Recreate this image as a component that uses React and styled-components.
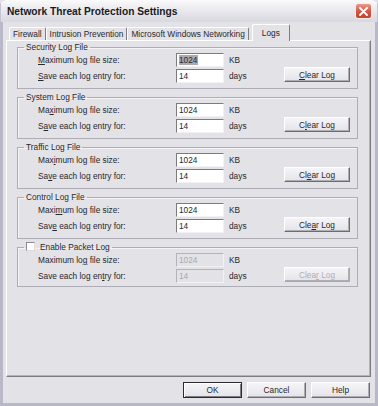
import React from "react";
import styled, { createGlobalStyle } from "styled-components";

const GlobalStyle = createGlobalStyle`
  html, body {
    margin: 0;
    padding: 0;
    background: #e3e2e7;
  }
`;

const Window = styled.div`
  width: 378px;
  height: 406px;
  display: flex;
  flex-direction: column;
  font-family: "Liberation Sans", Arial, sans-serif;
  font-size: 8.3px;
  color: #28282c;
  background: #b9b8c8;
  border-radius: 6px 6px 0 0;
  overflow: hidden;
`;

const TitleBar = styled.div`
  height: 22px;
  box-sizing: border-box;
  display: flex;
  align-items: flex-start;
  justify-content: space-between;
  padding: 3px 5px 0 6px;
  background: linear-gradient(#fbfbfc 0%, #e9e9ee 45%, #d8d8df 100%);
  border-left: 1px solid #c4c3d2;
  border-right: 1px solid #c4c3d2;
`;

const Title = styled.span`
  font-weight: bold;
  font-size: 10.2px;
  line-height: 18px;
  color: #1a1a22;
`;

const CloseButton = styled.div`
  width: 17px;
  height: 16px;
  box-sizing: border-box;
  border: 1px solid #f4eeee;
  border-radius: 3px;
  background: linear-gradient(#ec9a8c, #d2553f 55%, #c2432f);
  display: flex;
  align-items: center;
  justify-content: center;
`;

const Body = styled.div`
  flex: 1;
  display: flex;
  flex-direction: column;
  background: #e3e2e7;
  border: 3px solid #b9b8c8;
  border-top: 0;
  padding: 2px 4px 0 3px;
`;

const TabStrip = styled.div`
  height: 16px;
  display: flex;
  align-items: flex-end;
  padding-left: 3px;
`;

const Tab = styled.div`
  position: relative;
  height: ${(p) => (p.active ? "17px" : "13px")};
  box-sizing: border-box;
  padding: ${(p) => (p.active ? "2px 9px 0" : "0 3px")};
  margin: ${(p) => (p.active ? "0 0 -1px 3px" : "0")};
  line-height: 12px;
  background: #e3e2e7;
  border-top: 1px solid #ffffff;
  border-left: 1px solid #ffffff;
  border-right: 1px solid #7c7c82;
  border-radius: 2px 2px 0 0;
  z-index: ${(p) => (p.active ? 1 : 0)};
  white-space: nowrap;
`;

const Panel = styled.div`
  height: 337px;
  box-sizing: border-box;
  display: flex;
  flex-direction: column;
  gap: 3px;
  padding: 1px 12px 0 10px;
  border-top: 1px solid #ffffff;
  border-left: 1px solid #ffffff;
  border-right: 1px solid #7c7c82;
  border-bottom: 1px solid #7c7c82;
  box-shadow: inset -1px -1px 0 #b4b3ba;
`;

const Group = styled.fieldset`
  margin: 0;
  padding: 0 0 ${(p) => (p.short ? "2px" : "4px")} 0;
  min-width: 0;
  border: 1px solid #aeadb5;
  box-shadow: inset 1px 1px 0 #f4f4f6;
`;

const Legend = styled.legend`
  margin-left: 6px;
  padding: 0 2px;
  line-height: 10px;
  white-space: nowrap;
`;

const CheckBox = styled.span`
  display: inline-block;
  width: 9px;
  height: 9px;
  box-sizing: border-box;
  margin-right: 5px;
  vertical-align: -1px;
  background: #ffffff;
  border: 1px solid;
  border-color: #8a8a90 #dcdce0 #dcdce0 #8a8a90;
`;

const Row = styled.div`
  height: 16px;
  display: flex;
  align-items: center;
  padding-left: 20px;
`;

const Label = styled.span`
  width: 138px;
  white-space: nowrap;
`;

const TextBox = styled.div`
  width: 48px;
  height: 14px;
  box-sizing: border-box;
  padding-left: 2px;
  line-height: 12px;
  background: ${(p) => (p.disabled ? "#e3e2e7" : "#ffffff")};
  color: ${(p) => (p.disabled ? "#a9a8b0" : "#28282c")};
  border: 1px solid;
  border-color: ${(p) =>
    p.disabled ? "#b3b2b9 #f2f2f4 #f2f2f4 #b3b2b9" : "#7a7a80 #f2f2f4 #f2f2f4 #7a7a80"};
`;

const Selected = styled.span`
  background: #aaa9b0;
  padding-right: 1px;
`;

const Unit = styled.span`
  width: 60px;
  box-sizing: border-box;
  padding-left: 5px;
`;

const Button = styled.div`
  width: ${(p) => p.w || 59}px;
  height: ${(p) => p.h || 16}px;
  box-sizing: border-box;
  display: flex;
  align-items: center;
  justify-content: center;
  color: ${(p) => (p.disabled ? "#b0afb6" : "#28282c")};
  background: linear-gradient(#f5f5f7, #e4e3e8);
  border: 1px solid;
  border-color: ${(p) =>
    p.primary
      ? "#2c2c30"
      : p.disabled
      ? "#ffffff #a9a8af #a9a8af #ffffff"
      : "#ffffff #6c6c72 #6c6c72 #ffffff"};
  box-shadow: ${(p) =>
    p.primary
      ? "inset 1px 1px 0 #ffffff, inset -1px -1px 0 #7c7c82"
      : "inset -1px -1px 0 #aeadb4"};
`;

const ClearButton = styled(Button)`
  align-self: flex-start;
  margin-top: -1px;
`;

const Footer = styled.div`
  display: flex;
  justify-content: flex-end;
  gap: 5px;
  padding: 5px 1px 0 0;
`;

const groups = [
  {
    title: "Security Log File",
    size: ["", "M", "aximum log file size:"],
    days: ["", "S", "ave each log entry for:"],
    clear: ["", "C", "lear Log"],
    selected: true,
  },
  {
    title: "System Log File",
    size: ["Ma", "x", "imum log file size:"],
    days: ["S", "a", "ve each log entry for:"],
    clear: ["C", "l", "ear Log"],
  },
  {
    title: "Traffic Log File",
    size: ["Max", "i", "mum log file size:"],
    days: ["Sa", "v", "e each log entry for:"],
    clear: ["Cl", "e", "ar Log"],
  },
  {
    title: "Control Log File",
    size: ["Maxi", "m", "um log file size:"],
    days: ["Sav", "e", " each log entry for:"],
    clear: ["Cle", "a", "r Log"],
  },
];

const Key = ({ parts }) => (
  <>
    {parts[0]}
    <u>{parts[1]}</u>
    {parts[2]}
  </>
);

const CloseIcon = () => (
  <svg width="9" height="9" viewBox="0 0 9 9">
    <path d="M1 1 L8 8 M8 1 L1 8" stroke="#ffffff" strokeWidth="1.8" strokeLinecap="round" />
  </svg>
);

export default function App() {
  return (
    <>
      <GlobalStyle />
      <Window>
        <TitleBar>
          <Title>Network Threat Protection Settings</Title>
          <CloseButton>
            <CloseIcon />
          </CloseButton>
        </TitleBar>
        <Body>
          <TabStrip>
            <Tab>Firewall</Tab>
            <Tab>Intrusion Prevention</Tab>
            <Tab>Microsoft Windows Networking</Tab>
            <Tab active>Logs</Tab>
          </TabStrip>
          <Panel>
            {groups.map((g) => (
              <Group key={g.title}>
                <Legend>{g.title}</Legend>
                <Row>
                  <Label>
                    <Key parts={g.size} />
                  </Label>
                  <TextBox>{g.selected ? <Selected>1024</Selected> : "1024"}</TextBox>
                  <Unit>KB</Unit>
                </Row>
                <Row>
                  <Label>
                    <Key parts={g.days} />
                  </Label>
                  <TextBox>14</TextBox>
                  <Unit>days</Unit>
                  <ClearButton w={66} h={15}>
                    <span>
                      <Key parts={g.clear} />
                    </span>
                  </ClearButton>
                </Row>
              </Group>
            ))}
            <Group short>
              <Legend>
                <CheckBox />
                Enable Packet Log
              </Legend>
              <Row>
                <Label>
                  <Key parts={["Maximum lo", "g", " file size:"]} />
                </Label>
                <TextBox disabled>1024</TextBox>
                <Unit>KB</Unit>
              </Row>
              <Row>
                <Label>
                  <Key parts={["Save each log en", "t", "ry for:"]} />
                </Label>
                <TextBox disabled>14</TextBox>
                <Unit>days</Unit>
                <ClearButton w={66} h={15} disabled>
                  <span>
                    <Key parts={["Clea", "r", " Log"]} />
                  </span>
                </ClearButton>
              </Row>
            </Group>
          </Panel>
          <Footer>
            <Button primary>OK</Button>
            <Button>Cancel</Button>
            <Button>Help</Button>
          </Footer>
        </Body>
      </Window>
    </>
  );
}
